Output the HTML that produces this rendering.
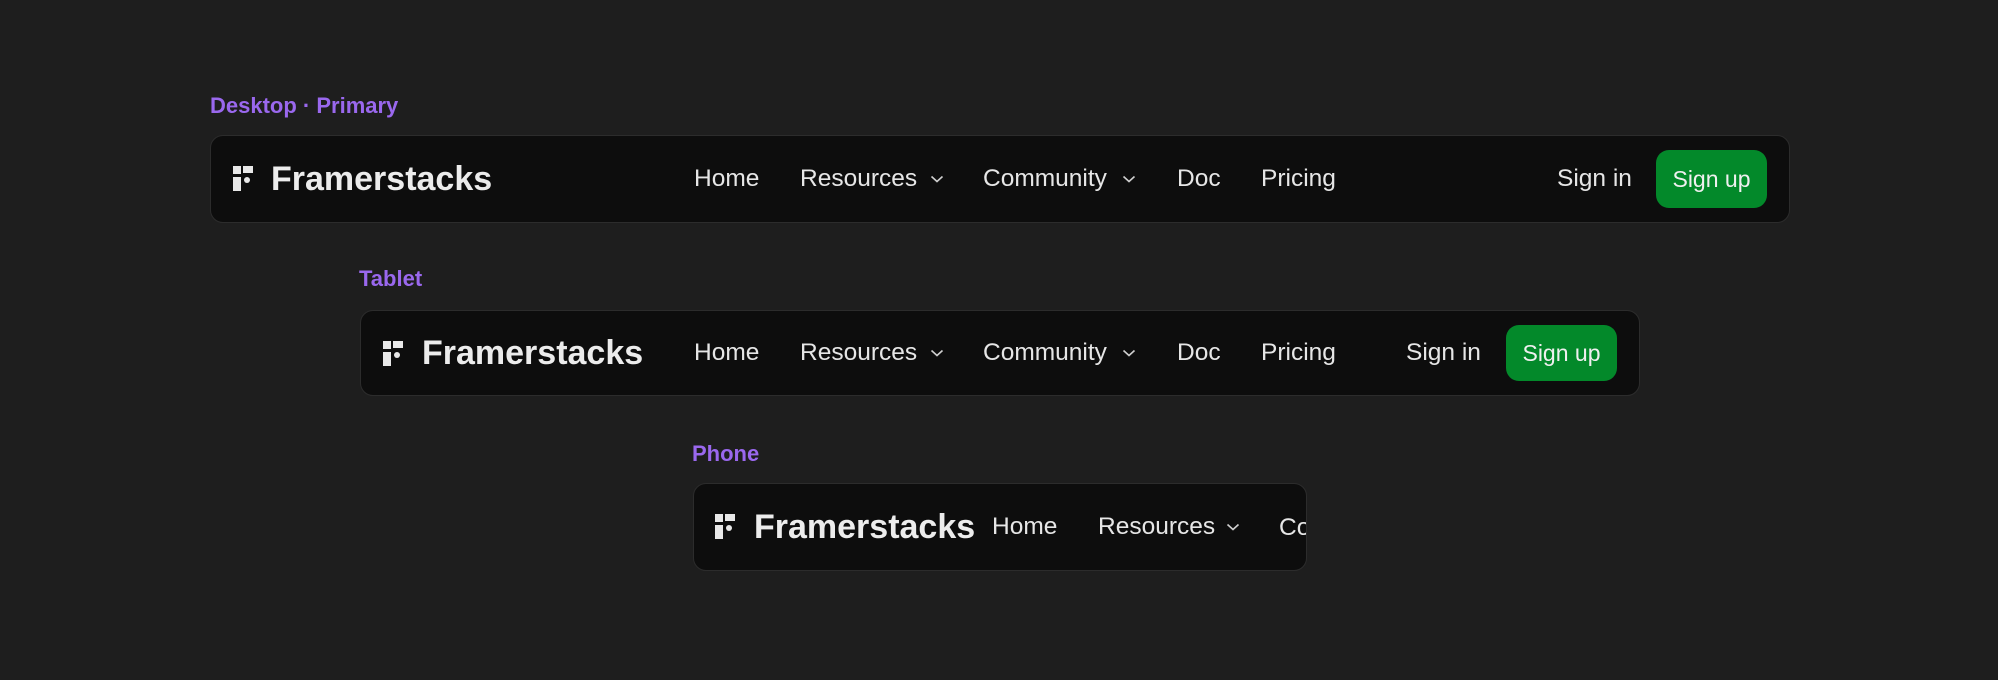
<!DOCTYPE html>
<html><head><meta charset="utf-8"><style>
*{margin:0;padding:0;box-sizing:border-box}
body{width:1998px;height:680px;background:#1e1e1e;position:relative;overflow:hidden;font-family:"Liberation Sans",sans-serif;color:#e8e8e8}
.lbl{position:absolute;color:#9a68ee;font-weight:bold;font-size:22px;line-height:30px;height:30px}
.box{position:absolute;background:#0d0d0d;border:1.5px solid #2c2c2c;border-radius:13px;overflow:hidden}
.t{position:absolute;height:40px;line-height:40px;white-space:nowrap;font-size:24.5px;color:#e6e6e6}
.logo{font-weight:bold;font-size:34px;color:#ececec}
.ico{position:absolute}
.chev{position:absolute}
.btn{position:absolute;background:#03892a;border-radius:13px;color:#f0f0f0;font-size:23px;text-align:center}
</style></head><body>

<div class="lbl" style="left:210px;top:91px">Desktop · Primary</div>
<div class="lbl" style="left:359px;top:264px">Tablet</div>
<div class="lbl" style="left:692px;top:439px">Phone</div>

<!-- Desktop -->
<div class="box" style="left:210px;top:135px;width:1580px;height:88px"></div>
<svg class="ico" style="left:233px;top:166px" width="20" height="25" viewBox="0 0 20 25" fill="#e8e8e8"><rect x="0" y="0" width="8" height="8"/><rect x="10" y="0" width="10" height="7"/><rect x="0" y="11" width="8" height="14"/><circle cx="14" cy="14" r="3"/></svg>
<div class="t logo" style="left:271px;top:159px">Framerstacks</div>
<div class="t" style="left:694px;top:159px">Home</div>
<div class="t" style="left:800px;top:159px">Resources</div>
<svg class="chev" style="left:930px;top:174px" width="14" height="10" viewBox="0 0 14 10"><path d="M1.5 2.5L7 7.5L12.5 2.5" fill="none" stroke="#cfcfcf" stroke-width="1.6"/></svg>
<div class="t" style="left:983px;top:159px">Community</div>
<svg class="chev" style="left:1122px;top:174px" width="14" height="10" viewBox="0 0 14 10"><path d="M1.5 2.5L7 7.5L12.5 2.5" fill="none" stroke="#cfcfcf" stroke-width="1.6"/></svg>
<div class="t" style="left:1177px;top:159px">Doc</div>
<div class="t" style="left:1261px;top:159px">Pricing</div>
<div class="t" style="left:1557px;top:159px">Sign in</div>
<div class="btn" style="left:1656px;top:150px;width:111px;height:58px;line-height:58px">Sign up</div>

<!-- Tablet -->
<div class="box" style="left:360px;top:310px;width:1280px;height:86px"></div>
<svg class="ico" style="left:383px;top:341px" width="20" height="25" viewBox="0 0 20 25" fill="#e8e8e8"><rect x="0" y="0" width="8" height="8"/><rect x="10" y="0" width="10" height="7"/><rect x="0" y="11" width="8" height="14"/><circle cx="14" cy="14" r="3"/></svg>
<div class="t logo" style="left:422px;top:333px">Framerstacks</div>
<div class="t" style="left:694px;top:333px">Home</div>
<div class="t" style="left:800px;top:333px">Resources</div>
<svg class="chev" style="left:930px;top:348px" width="14" height="10" viewBox="0 0 14 10"><path d="M1.5 2.5L7 7.5L12.5 2.5" fill="none" stroke="#cfcfcf" stroke-width="1.6"/></svg>
<div class="t" style="left:983px;top:333px">Community</div>
<svg class="chev" style="left:1122px;top:348px" width="14" height="10" viewBox="0 0 14 10"><path d="M1.5 2.5L7 7.5L12.5 2.5" fill="none" stroke="#cfcfcf" stroke-width="1.6"/></svg>
<div class="t" style="left:1177px;top:333px">Doc</div>
<div class="t" style="left:1261px;top:333px">Pricing</div>
<div class="t" style="left:1406px;top:333px">Sign in</div>
<div class="btn" style="left:1506px;top:325px;width:111px;height:56px;line-height:56px">Sign up</div>

<!-- Phone -->
<div class="box" style="left:693px;top:483px;width:614px;height:88px">
<div class="t" style="left:585px;top:24px">Community</div>
</div>
<svg class="ico" style="left:715px;top:514px" width="20" height="25" viewBox="0 0 20 25" fill="#e8e8e8"><rect x="0" y="0" width="8" height="8"/><rect x="10" y="0" width="10" height="7"/><rect x="0" y="11" width="8" height="14"/><circle cx="14" cy="14" r="3"/></svg>
<div class="t logo" style="left:754px;top:507px">Framerstacks</div>
<div class="t" style="left:992px;top:507px">Home</div>
<div class="t" style="left:1098px;top:507px">Resources</div>
<svg class="chev" style="left:1226px;top:522px" width="14" height="10" viewBox="0 0 14 10"><path d="M1.5 2.5L7 7.5L12.5 2.5" fill="none" stroke="#cfcfcf" stroke-width="1.6"/></svg>

</body></html>
